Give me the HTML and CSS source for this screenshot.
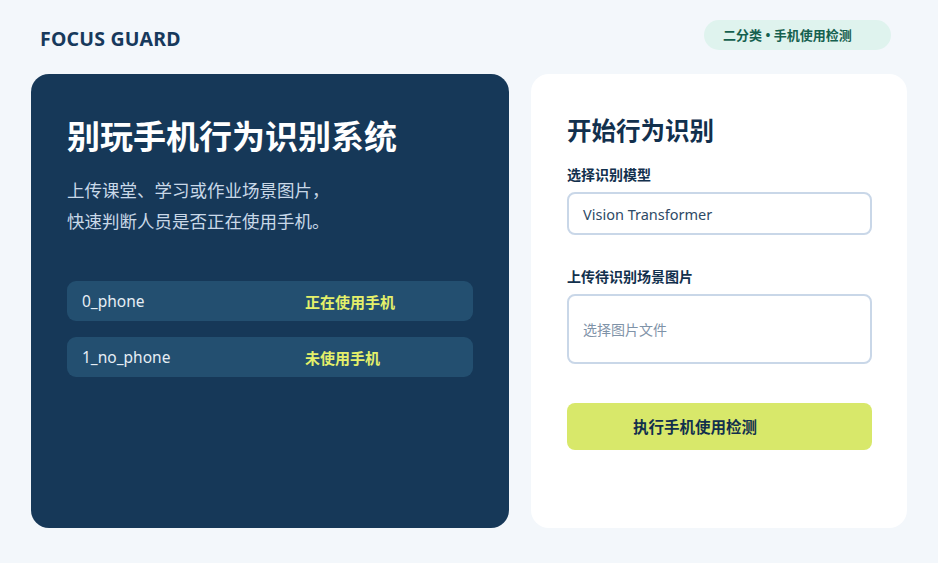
FILE: index.html
```html
<!DOCTYPE html>
<html lang="zh">
<head>
<meta charset="utf-8">
<link rel="stylesheet" href="styles.css">
</head>
<body>
<div class="page">
  <header class="topbar">
    <div class="brand">FOCUS GUARD</div>
    <div class="badge">二分类 • 手机使用检测</div>
  </header>
  <main class="cards">
    <section class="hero">
      <h1 class="hero-title">别玩手机行为识别系统</h1>
      <p class="hero-desc">上传课堂、学习或作业场景图片，<br>快速判断人员是否正在使用手机。</p>
      <div class="classes">
        <div class="class-row"><span class="class-key">0_phone</span><span class="class-val">正在使用手机</span></div>
        <div class="class-row"><span class="class-key">1_no_phone</span><span class="class-val">未使用手机</span></div>
      </div>
    </section>
    <section class="panel">
      <h2 class="panel-title">开始行为识别</h2>
      <div class="field">
        <div class="field-label">选择识别模型</div>
        <div class="select">Vision Transformer</div>
      </div>
      <div class="field field-upload">
        <div class="field-label">上传待识别场景图片</div>
        <div class="file">选择图片文件</div>
      </div>
      <button class="run">执行手机使用检测</button>
    </section>
  </main>
</div>
</body>
</html>
```
FILE: styles.css
```css
* { box-sizing: border-box; margin: 0; padding: 0; }
html, body { height: 100%; }
body {
  background: #f3f7fb;
  font-family: "Noto Sans", "Noto Sans CJK SC", sans-serif;
  color: #12304d;
}
.page { padding: 20px 31px 0 31px; }
.topbar {
  display: flex;
  justify-content: space-between;
  align-items: center;
  height: 30px;
  padding-left: 9px;
  padding-right: 16px;
}
.brand {
  font-weight: 700;
  font-size: 19.5px;
  color: #17395c;
  letter-spacing: 0.2px;
  margin-top: 6px;
}
.badge {
  background: #dff3ee;
  color: #15604f;
  font-weight: 700;
  font-size: 13px;
  height: 30px;
  line-height: 30px;
  border-radius: 15px;
  padding: 0 0 0 19px;
  width: 187px;
  text-align: left;
  white-space: nowrap;
}
.cards {
  display: grid;
  grid-template-columns: 478px 376px;
  gap: 22px;
  margin-top: 24px;
}
.hero {
  background: #163858;
  border-radius: 18px;
  height: 454px;
  padding: 40px 36px 0 36px;
}
.hero-title {
  font-size: 33px;
  font-weight: 700;
  color: #ffffff;
  line-height: 46px;
}
.hero-desc {
  margin-top: 15px;
  font-size: 17.5px;
  line-height: 31px;
  color: #c9d8e8;
}
.classes {
  margin-top: 44px;
  display: flex;
  flex-direction: column;
  gap: 16px;
}
.class-row {
  background: #234f70;
  border-radius: 9px;
  height: 40px;
  display: flex;
  align-items: center;
  padding-left: 15px;
}
.class-key {
  width: 223px;
  font-size: 15.5px;
  color: #e6eef5;
}
.class-val {
  font-size: 15px;
  font-weight: 700;
  color: #e4f06a;
}
.panel {
  background: #ffffff;
  border-radius: 18px;
  height: 454px;
  padding: 40px 35px 0 36px;
}
.panel-title {
  font-size: 24.5px;
  font-weight: 700;
  color: #12304d;
  line-height: 34px;
}
.field { margin-top: 17px; }
.field-label {
  font-size: 14px;
  font-weight: 700;
  color: #12304d;
  line-height: 20px;
}
.select {
  margin-top: 7px;
  height: 43px;
  border: 2px solid #c9d7e8;
  border-radius: 8px;
  display: flex;
  align-items: center;
  padding-left: 14px;
  font-size: 14.5px;
  color: #2e4a66;
}
.field-upload { margin-top: 32px; }
.file {
  margin-top: 7px;
  height: 70px;
  border: 2px solid #c9d7e8;
  border-radius: 8px;
  display: flex;
  align-items: center;
  padding-left: 14px;
  font-size: 14px;
  color: #7f93a8;
}
.run {
  margin-top: 39px;
  width: 100%;
  height: 47px;
  border: none;
  border-radius: 8px;
  background: #d8e86a;
  font-family: "Noto Sans", "Noto Sans CJK SC", sans-serif;
  font-size: 15.5px;
  font-weight: 700;
  color: #12304d;
  padding-right: 49px;
  text-align: center;
}
```
